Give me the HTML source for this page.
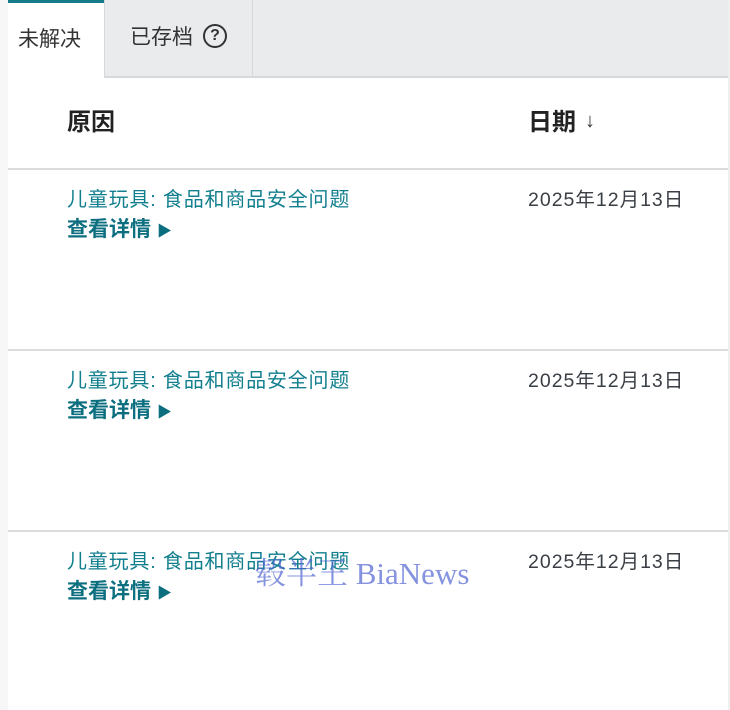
<!DOCTYPE html>
<html><head><meta charset="utf-8"><style>
body{margin:0;width:730px;height:710px;overflow:hidden;background:#fff;font-family:"Liberation Sans","Noto Sans CJK SC",sans-serif;position:relative}
.l{position:absolute;left:0;top:0;width:8px;height:710px;background:#f7f7f7}
.r{position:absolute;right:0;top:0;width:2px;height:710px;background:#f0f0f0}
.bar{position:absolute;left:8px;top:0;width:720px;height:76px;background:#eaebed;border-bottom:2px solid #d5d9d9}
.t1{position:absolute;left:8px;top:0;width:96px;height:78px;background:#fff;border-top:3px solid #157a8a;box-sizing:border-box}
.t2{position:absolute;left:104px;top:0;width:149px;height:77px;border-left:1px solid #d5d9d9;border-right:1px solid #d5d9d9;box-sizing:border-box}
.tx{position:absolute;font-size:21px;color:#333;line-height:24px}
.h{position:absolute;font-size:24px;font-weight:bold;color:#222;top:109px;line-height:28px}
.hr{position:absolute;left:8px;width:720px;height:2px;background:#dcdcdc}
.a{position:absolute;left:67px;font-size:20px;color:#127f8f;line-height:24px;letter-spacing:0.8px}
.b{position:absolute;left:67px;font-size:21px;font-weight:bold;color:#0c6f80;line-height:24px}
.d{position:absolute;left:528px;font-size:19.5px;color:#3a3f45;line-height:24px;letter-spacing:1px}
.wm{position:absolute;left:255px;top:548px;font-family:"Liberation Serif","Noto Serif CJK SC",serif;font-size:31px;color:rgba(80,100,210,.7)}
</style></head><body>
<div class="l"></div><div class="r"></div>
<div class="bar"></div>
<div class="t1"></div>
<div class="t2"></div>
<div class="tx" style="left:18px;top:28px">未解决</div>
<div class="tx" style="left:130px;top:26px">已存档</div>
<div style="position:absolute;left:203px;top:24px;width:24px;height:24px;border:2px solid #333;border-radius:50%;box-sizing:border-box;font-size:16px;line-height:20px;text-align:center;font-weight:bold;color:#333">?</div>
<div class="h" style="left:67px">原因</div>
<div class="h" style="left:528px">日期</div>
<div style="position:absolute;left:585px;top:110px;font-size:20px;color:#333">↓</div>
<div class="hr" style="top:168px"></div>
<div class="hr" style="top:349px"></div>
<div class="hr" style="top:530px"></div>
<div class="a" style="top:188px">儿童玩具: 食品和商品安全问题</div>
<div class="b" style="top:218px">查看详情 <span style="font-size:15px">▶</span></div>
<div class="d" style="top:188px">2025年12月13日</div>
<div class="a" style="top:369px">儿童玩具: 食品和商品安全问题</div>
<div class="b" style="top:399px">查看详情 <span style="font-size:15px">▶</span></div>
<div class="d" style="top:369px">2025年12月13日</div>
<div class="a" style="top:550px">儿童玩具: 食品和商品安全问题</div>
<div class="b" style="top:580px">查看详情 <span style="font-size:15px">▶</span></div>
<div class="d" style="top:550px">2025年12月13日</div>
<div class="wm">毂半王 BiaNews</div>
</body></html>
